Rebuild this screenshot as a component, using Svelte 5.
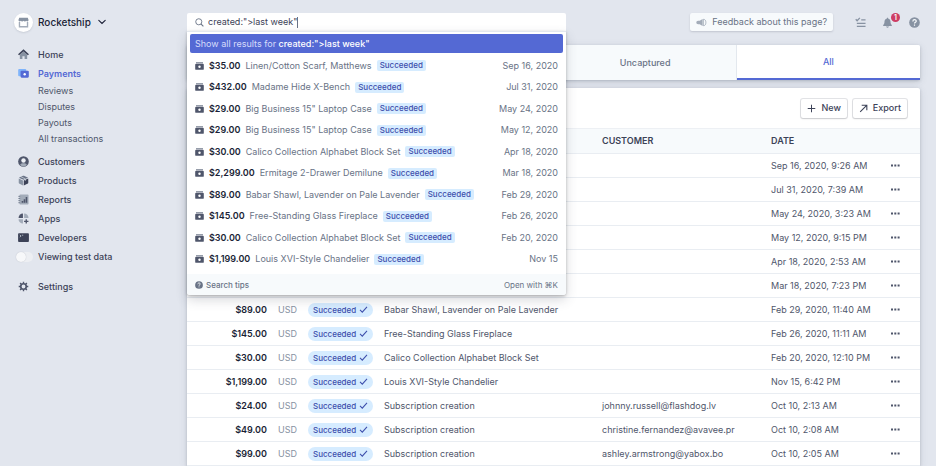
<script lang="ts">
    interface Payment {
        amount: string;
        description: string;
        customer?: string;
        date: string;
        day?: string;
    }

    const payments: Payment[] = [
        { amount: '$35.00', description: 'Linen/Cotton Scarf, Matthews', date: 'Sep 16, 2020, 9:26 AM', day: 'Sep 16, 2020' },
        { amount: '$432.00', description: 'Madame Hide X-Bench', date: 'Jul 31, 2020, 7:39 AM', day: 'Jul 31, 2020' },
        { amount: '$29.00', description: 'Big Business 15" Laptop Case', date: 'May 24, 2020, 3:23 AM', day: 'May 24, 2020' },
        { amount: '$29.00', description: 'Big Business 15" Laptop Case', date: 'May 12, 2020, 9:15 PM', day: 'May 12, 2020' },
        { amount: '$30.00', description: 'Calico Collection Alphabet Block Set', date: 'Apr 18, 2020, 2:53 AM', day: 'Apr 18, 2020' },
        { amount: '$2,299.00', description: 'Ermitage 2-Drawer Demilune', date: 'Mar 18, 2020, 7:23 PM', day: 'Mar 18, 2020' },
        { amount: '$89.00', description: 'Babar Shawl, Lavender on Pale Lavender', date: 'Feb 29, 2020, 11:40 AM', day: 'Feb 29, 2020' },
        { amount: '$145.00', description: 'Free-Standing Glass Fireplace', date: 'Feb 26, 2020, 11:11 AM', day: 'Feb 26, 2020' },
        { amount: '$30.00', description: 'Calico Collection Alphabet Block Set', date: 'Feb 20, 2020, 12:10 PM', day: 'Feb 20, 2020' },
        { amount: '$1,199.00', description: 'Louis XVI-Style Chandelier', date: 'Nov 15, 6:42 PM', day: 'Nov 15' },
        { amount: '$24.00', description: 'Subscription creation', customer: 'johnny.russell@flashdog.lv', date: 'Oct 10, 2:13 AM' },
        { amount: '$49.00', description: 'Subscription creation', customer: 'christine.fernandez@avavee.pr', date: 'Oct 10, 2:08 AM' },
        { amount: '$99.00', description: 'Subscription creation', customer: 'ashley.armstrong@yabox.bo', date: 'Oct 10, 2:05 AM' },
    ];

    const tabs = ['Succeeded', 'Refunded', 'Uncaptured', 'All'];
    const paymentLinks = ['Reviews', 'Disputes', 'Payouts', 'All transactions'];
    const mainLinks = ['Customers', 'Products', 'Reports', 'Apps', 'Developers'];

    // Tabs and rows that lie under the open search results
    const coveredTabs = 2;
    const coveredRows = 6;

    let query = $state('created:">last week"');
    let activeTab = $state('All');
    let testData = $state(false);

    const searchOpen = $derived(query.length > 0);
    const results = $derived(payments.filter((p) => p.day));
</script>

{#snippet icon(name: string)}
    <svg class="icon" viewBox="0 0 12 12" aria-hidden="true">
        {#if name === 'Home'}
            <path d="M2 6.2 6 2.8l4 3.4V11H7.2V8H4.8v3H2z" fill="#8792a2" />
            <path d="M.6 6.3 6 1.5l5.4 4.8" fill="none" stroke="#3c4257" stroke-width="1.7" />
        {:else if name === 'Payments'}
            <rect x=".2" y="1" width="8.8" height="8" rx="1.2" fill="#7fb4fb" />
            <rect x="2.8" y="3" width="9" height="7.6" rx="1.2" fill="#5469d4" />
            <circle cx="7.3" cy="6.8" r="1.3" fill="#fff" />
        {:else if name === 'Customers'}
            <circle cx="6" cy="6" r="5.8" fill="#4f566b" />
            <path d="M2.3 9.8C3 8.3 4.500 8 6 8s3 .3 3.700 1.800A5.300 5.300 0 0 1 6 11.400a5.300 5.300 0 0 1-3.700-1.600z" fill="#a3acb9" />
            <circle cx="6" cy="4.9" r="2.4" fill="#eef1f6" />
        {:else if name === 'Products'}
            <path d="M.8 3.7 5.400 6v5.500L1.300 9.300a1 1 0 0 1-.5-.8z" fill="#8792a2" />
            <path d="M6.300 6 11.200 3.700v4.800a1 1 0 0 1-.5.800L6.300 11.500z" fill="#3c4257" />
            <path d="M1 3 5.500.7h1L11 3 6 5.300z" fill="#6b7488" />
            <path d="m3.200 1.900 4.900 2.400v2" fill="none" stroke="#c1c9d2" stroke-width=".9" />
        {:else if name === 'Reports'}
            <rect x="1.600" y=".6" width="9.900" height="10.800" rx="1" fill="#a3acb9" />
            <path d="M.4 2.600h2M.4 4.900h2M.4 7.200h2M.4 9.500h2" stroke="#697386" stroke-width=".9" />
            <path d="M4 7.500h1.700v2H4zM6.200 5.700h1.700v3.800H6.200zM8.400 3.300h1.700v6.200H8.400z" fill="#4f566b" />
        {:else if name === 'Apps'}
            <path d="M5.400.6v4.800H.6A4.800 4.800 0 0 1 5.400.6z" fill="#4f566b" />
            <path d="M6.700.6a4.800 4.800 0 0 1 4.800 4.800H6.700zM.6 6.700h4.800v4.800A4.800 4.800 0 0 1 .6 6.700z" fill="#a3acb9" />
            <path d="M9 6.700v4.800M6.600 9.100h4.800" stroke="#4f566b" stroke-width="1.500" />
        {:else if name === 'Developers'}
            <rect x=".1" y="1.300" width="11.800" height="9.500" rx="1" fill="#3c4257" />
            <path d="m2 3.200 1.400 1.200L2 5.600M4.400 3.500h1.300" fill="none" stroke="#cfd7df" stroke-width=".8" />
        {:else if name === 'Settings'}
            <circle cx="6" cy="6" r="3" fill="none" stroke="#4f566b" stroke-width="1.800" />
            <path d="M6 .8v1.800M6 9.400v1.800M.8 6h1.800M9.400 6h1.800M2.300 2.300l1.300 1.300M8.400 8.400l1.300 1.300M9.700 2.300 8.400 3.600M3.600 8.400 2.300 9.700" stroke="#4f566b" stroke-width="1.500" />
        {/if}
    </svg>
{/snippet}

{#snippet help()}
    <svg class="help" viewBox="0 0 12 12" aria-hidden="true">
        <circle cx="6" cy="6" r="5.800" fill="currentColor" />
        <path d="M4.200 4.800c0-2.500 3.700-2.400 3.700-.3C7.900 5.800 6 5.700 6 7.200M6 8.200v1.300" fill="none" stroke="#f7fafc" stroke-width="1.300" />
    </svg>
{/snippet}

<div class="layout">
    <aside class="sidebar">
        <button class="account">
            <span class="avatar">
                <svg viewBox="0 0 12 12" aria-hidden="true">
                    <path d="M1.300.8h9.400l.8 2.600c0 1.800-2 1.800-2.500.6-.5 1.200-2.500 1.200-3 0-.5 1.200-2.500 1.200-3 0C2.500 5.200.5 5.200.5 3.400z" fill="#8792a2" />
                    <path d="M1.600 5.500v5.200h8.800V5.500" fill="none" stroke="#a3acb9" stroke-width="1.500" />
                </svg>
            </span>
            Rocketship
            <svg class="chevron" viewBox="0 0 8 8" aria-hidden="true">
                <path d="m.8 2.300 3.200 3.200 3.200-3.200" fill="none" stroke="currentColor" stroke-width="1.100" stroke-linecap="round" />
            </svg>
        </button>

        <nav>
            <a class="link" href="#home">{@render icon('Home')}Home</a>
            <a class="link current" href="#payments">{@render icon('Payments')}Payments</a>
            <div class="sub-links">
                {#each paymentLinks as link (link)}
                    <a class="sub-link" href="#payments">{link}</a>
                {/each}
            </div>
            {#each mainLinks as link (link)}
                <a class="link" href="#{link.toLowerCase()}">{@render icon(link)}{link}</a>
            {/each}
            <label class="link toggle">
                <input type="checkbox" bind:checked={testData} />
                Viewing test data
            </label>
            <a class="link settings" href="#settings">{@render icon('Settings')}Settings</a>
        </nav>
    </aside>

    <main class="content">
        <header class="topbar">
            <div class="search">
                <div class="search-box">
                    <svg class="magnifier" viewBox="0 0 10 10" aria-hidden="true">
                        <circle cx="4.200" cy="4.200" r="3.400" fill="none" stroke="currentColor" />
                        <path d="m6.600 6.600 2.700 2.700" stroke="currentColor" stroke-width="1.200" />
                    </svg>
                    <input class="query" type="text" aria-label="Search" bind:value={query} />
                    <span class="caret"></span>
                </div>
                {#if searchOpen}
                    <div class="dropdown">
                        <button class="show-all">Show all results for <strong>{query}</strong></button>
                        <ul class="results">
                            {#each results as result}
                                <li class="result">
                                    <svg class="result-icon" viewBox="0 0 9 8" aria-hidden="true">
                                        <path d="M1 .3h7v1H1z" fill="#697386" />
                                        <rect x=".2" y="1.800" width="8.600" height="6" rx=".9" fill="#4f566b" />
                                        <circle cx="4.500" cy="4.800" r="1.200" fill="#fff" />
                                    </svg>
                                    <span class="result-amount">{result.amount}</span>
                                    <span>{result.description}</span>
                                    <span class="tag">Succeeded</span>
                                    <span class="result-date">{result.day}</span>
                                </li>
                            {/each}
                        </ul>
                        <footer class="dropdown-footer">
                            <a class="tips" href="#tips">{@render help()}Search tips</a>
                            <span>Open with ⌘K</span>
                        </footer>
                    </div>
                {/if}
            </div>

            <div class="tools">
                <button class="feedback">
                    <svg class="horn" viewBox="0 0 12 10" aria-hidden="true">
                        <path d="M7.200 1v8L4 7H2.200a2 2 0 0 1 0-4H4z" fill="#a3acb9" />
                        <path d="M8 1.500c3.800-.8 3.800 7.800 0 7z" fill="none" stroke="#a3acb9" />
                    </svg>
                    Feedback about this page?
                </button>
                <button class="tool" aria-label="Setup guide">
                    <svg viewBox="0 0 12 12" aria-hidden="true">
                        <path d="m.8 2.500 1.500 1.600L5.300.9M6.800 3.200h4.700M2 7h9.500M2 10.300h9.500" fill="none" stroke="currentColor" stroke-width="1.400" />
                    </svg>
                </button>
                <button class="tool" aria-label="Notifications">
                    <svg viewBox="0 0 12 12" aria-hidden="true">
                        <path d="M5.400.7h1.200v.8C8.500 2 9.300 3.500 9.300 5.300c0 2 .6 2.800 1.400 3.500v.9H1.300v-.9c.8-.7 1.400-1.500 1.400-3.500C2.700 3.500 3.500 2 5.400 1.500zM4.400 10.400h3.200c-.3 1.600-2.900 1.600-3.200 0z" fill="currentColor" />
                    </svg>
                    <span class="badge">1</span>
                </button>
                <button class="tool" aria-label="Help">{@render help()}</button>
            </div>
        </header>

        <div class="tabs" role="tablist">
            {#each tabs as tab, i (tab)}
                <button
                    class="tab"
                    class:active={tab === activeTab}
                    class:covered={searchOpen && i < coveredTabs}
                    role="tab"
                    aria-selected={tab === activeTab}
                    onclick={() => (activeTab = tab)}
                >
                    {tab}
                </button>
            {/each}
        </div>

        <section class="panel">
            <div class="actions">
                <button class="action">
                    <svg viewBox="0 0 10 10" aria-hidden="true">
                        <path d="M5 .8v8.400M.8 5h8.400" stroke="currentColor" stroke-width="1.100" />
                    </svg>
                    New
                </button>
                <button class="action">
                    <svg viewBox="0 0 10 10" aria-hidden="true">
                        <path d="M1.300 8.700 8.500 1.500M3 1.300h5.700V7" fill="none" stroke="currentColor" stroke-width="1.200" />
                    </svg>
                    Export
                </button>
            </div>

            <table class="payments">
                <colgroup>
                    <col class="col-amount" />
                    <col class="col-currency" />
                    <col class="col-status" />
                    <col class="col-description" />
                    <col class="col-customer" />
                    <col class="col-date" />
                    <col class="col-more" />
                </colgroup>
                <thead>
                    <tr>
                        <th class="amount"><span class:covered={searchOpen}>Amount</span></th>
                        <th></th>
                        <th></th>
                        <th><span class:covered={searchOpen}>Description</span></th>
                        <th>Customer</th>
                        <th>Date</th>
                        <th></th>
                    </tr>
                </thead>
                <tbody>
                    {#each payments as payment, i}
                        {@const covered = searchOpen && i < coveredRows}
                        <tr>
                            <td class="amount"><span class:covered>{payment.amount}</span></td>
                            <td class="currency"><span class:covered>USD</span></td>
                            <td>
                                <span class="pill" class:covered>
                                    Succeeded
                                    <svg viewBox="0 0 10 8" aria-hidden="true">
                                        <path d="M1 4.500 3.600 7 9 1" fill="none" stroke="currentColor" stroke-width="1.200" />
                                    </svg>
                                </span>
                            </td>
                            <td><span class:covered>{payment.description}</span></td>
                            <td>{payment.customer ?? ''}</td>
                            <td>{payment.date}</td>
                            <td>
                                <button class="more" aria-label="More actions">
                                    <svg viewBox="0 0 9 3" aria-hidden="true">
                                        <path d="M0 .5h2v2H0zM3.300.5h2v2h-2zM6.600.5h2v2h-2z" fill="currentColor" />
                                    </svg>
                                </button>
                            </td>
                        </tr>
                    {/each}
                </tbody>
            </table>
        </section>
    </main>
</div>

<style>
    :global(body) {
        background: #e2e6ee;
    }

    .layout {
        display: flex;
        box-sizing: border-box;
        min-height: 100vh;
        font-family: Inter, 'Liberation Sans', sans-serif;
        font-size: 9px;
        line-height: 14px;
        color: #3c4257;
        white-space: nowrap;
    }

    button,
    input {
        margin: 0;
        padding: 0;
        border: 0;
        background: none;
        font: inherit;
        color: inherit;
    }

    a {
        color: inherit;
        text-decoration: none;
    }

    svg {
        display: block;
        flex: none;
    }

    .covered {
        visibility: hidden;
    }

    .sidebar {
        flex: none;
        box-sizing: border-box;
        width: 187px;
        padding: 12px 0 0 14px;
    }

    .account {
        display: flex;
        align-items: center;
        gap: 5px;
        height: 20px;
        margin-bottom: 13px;
        font-size: 10px;
        font-weight: 500;
        color: #1a1f36;
    }

    .avatar {
        display: grid;
        place-items: center;
        width: 19px;
        height: 19px;
        border-radius: 50%;
        background: #fff;
        box-shadow: 0 1px 2px rgba(60, 66, 87, 0.15);
    }

    .avatar svg {
        width: 11px;
        height: 11px;
    }

    .chevron {
        width: 8px;
        height: 8px;
        margin-left: 2px;
    }

    .link {
        display: flex;
        align-items: center;
        gap: 9px;
        height: 19px;
        padding-left: 4px;
        font-weight: 500;
    }

    .link.current {
        font-weight: 600;
        color: #5469d4;
    }

    .icon {
        width: 11px;
        height: 11px;
    }

    .sub-links {
        margin-bottom: 5px;
        padding-left: 24px;
    }

    .sub-link {
        display: block;
        line-height: 16px;
        color: #4f566b;
    }

    .link.toggle {
        gap: 5px;
        padding-left: 2px;
    }

    .toggle input {
        appearance: none;
        display: flex;
        width: 17px;
        height: 10px;
        border-radius: 5px;
        background: #edeff3;
    }

    .toggle input::before {
        content: '';
        width: 10px;
        height: 10px;
        border-radius: 50%;
        background: #f7f8fa;
        box-shadow: 0 0 1px rgba(60, 66, 87, 0.3);
    }

    .toggle input:checked {
        justify-content: flex-end;
        background: #5469d4;
    }

    .settings {
        margin-top: 11px;
    }

    .content {
        display: flex;
        flex: 1;
        flex-direction: column;
        min-width: 0;
        padding: 13px 16px 0 0;
    }

    .topbar {
        display: flex;
        justify-content: space-between;
        height: 18px;
        margin-bottom: 14px;
    }

    .search {
        position: relative;
        z-index: 1;
        width: 379px;
    }

    .search-box {
        display: flex;
        align-items: center;
        height: 18px;
        padding-left: 8px;
        border-radius: 2px 2px 0 0;
        background: #fff;
    }

    .magnifier {
        width: 9px;
        height: 9px;
        margin-right: 4px;
        color: #697386;
    }

    .query {
        field-sizing: content;
        outline: none;
    }

    .caret {
        width: 1px;
        height: 11px;
        background: #697386;
    }

    .dropdown {
        position: absolute;
        top: 100%;
        left: 0;
        right: 0;
        border-top: 1px solid #e3e8ee;
        border-radius: 0 0 3px 3px;
        background: #fff;
        box-shadow: 0 1px 3px rgba(0, 0, 0, 0.25), 0 5px 12px rgba(60, 66, 87, 0.2);
    }

    .show-all {
        display: block;
        width: calc(100% - 6px);
        height: 19px;
        margin: 2px 3px;
        padding: 0 5px;
        border-radius: 2px;
        background: #5469d4;
        color: #d6dcfb;
        text-align: left;
    }

    .show-all strong {
        font-weight: 500;
        color: #fff;
    }

    .results {
        display: flex;
        flex-direction: column;
        height: 215px;
        margin: 0;
        padding: 0 8px 4px;
        list-style: none;
    }

    .result {
        display: flex;
        flex: 1;
        align-items: center;
        gap: 5px;
        color: #697386;
    }

    .result-icon {
        width: 9px;
        height: 8px;
    }

    .result-amount {
        font-weight: 600;
        color: #1a1f36;
    }

    .tag {
        padding: 0 3px;
        border-radius: 2px;
        background: #d6ecff;
        font-size: 8px;
        font-weight: 500;
        line-height: 11px;
        color: #3d4eac;
    }

    .result-date {
        margin-left: auto;
    }

    .dropdown-footer {
        display: flex;
        align-items: center;
        justify-content: space-between;
        height: 21px;
        padding: 0 8px;
        border-radius: 0 0 3px 3px;
        background: #f7fafc;
        font-size: 8px;
        color: #697386;
    }

    .tips {
        display: flex;
        align-items: center;
        gap: 3px;
        font-weight: 500;
    }

    .tips :global(.help) {
        width: 8px;
        height: 8px;
    }

    .tools {
        display: flex;
        align-items: center;
        gap: 16px;
    }

    .feedback {
        display: flex;
        align-items: center;
        gap: 5px;
        height: 18px;
        margin-right: 6px;
        padding: 0 6px;
        border-radius: 2px;
        background: #f7fafc;
        box-shadow: 0 1px 2px rgba(60, 66, 87, 0.2);
        color: #697386;
    }

    .horn {
        width: 11px;
        height: 9px;
    }

    .tool {
        position: relative;
        color: #8792a2;
    }

    .tool svg {
        width: 11px;
        height: 11px;
    }

    .badge {
        position: absolute;
        top: -4px;
        right: -7px;
        width: 9px;
        height: 9px;
        border-radius: 50%;
        background: #cd3d64;
        font-size: 7px;
        font-weight: 600;
        line-height: 9px;
        text-align: center;
        color: #fff;
    }

    .tabs {
        display: grid;
        grid-template-columns: repeat(4, 1fr);
        margin-bottom: 8px;
        border-radius: 2px;
        background: #f7fafc;
        box-shadow: 0 1px 3px rgba(60, 66, 87, 0.25), 0 2px 8px rgba(60, 66, 87, 0.12);
    }

    .tab {
        height: 35px;
        font-weight: 500;
        color: #697386;
    }

    .tab.active {
        border-bottom: 2px solid #5469d4;
        border-radius: 0 2px 0 0;
        background: #fff;
        box-shadow: -1px 0 #e3e8ee;
        color: #5469d4;
    }

    .panel {
        flex: 1;
        border-radius: 2px 2px 0 0;
        background: #fff;
        box-shadow: 0 1px 3px rgba(60, 66, 87, 0.25), 0 2px 8px rgba(60, 66, 87, 0.12);
    }

    .actions {
        display: flex;
        align-items: center;
        justify-content: flex-end;
        gap: 6px;
        height: 40px;
        padding-right: 13px;
    }

    .action {
        display: flex;
        align-items: center;
        gap: 5px;
        height: 19px;
        padding: 0 6px;
        border-radius: 2px;
        background: #fff;
        box-shadow: 0 0 0 1px rgba(60, 66, 87, 0.14), 0 1px 2px rgba(0, 0, 0, 0.12);
        font-weight: 500;
    }

    .action svg {
        width: 9px;
        height: 9px;
    }

    .payments {
        width: 100%;
        table-layout: fixed;
        border-collapse: separate;
        border-spacing: 0;
    }

    .col-amount {
        width: 91px;
    }

    .col-currency {
        width: 30px;
    }

    .col-status {
        width: 76px;
    }

    .col-description {
        width: 218px;
    }

    .col-date {
        width: 120px;
    }

    .col-more {
        width: 29px;
    }

    th,
    td {
        box-sizing: border-box;
        height: 24px;
        padding: 0;
        border-bottom: 1px solid #e9edf2;
        text-align: left;
        vertical-align: middle;
        color: #4f566b;
    }

    th {
        height: 26px;
        border-top: 1px solid #edf0f4;
        background: #f7fafc;
        font-weight: 600;
        text-transform: uppercase;
        color: #3c4257;
    }

    .amount {
        padding-right: 11px;
        text-align: right;
    }

    td.amount {
        font-weight: 600;
        color: #1a1f36;
    }

    td.currency {
        color: #8792a2;
    }

    .pill {
        display: inline-flex;
        align-items: center;
        gap: 3px;
        height: 14px;
        padding: 0 5px;
        border-radius: 7px;
        background: #d6ecff;
        font-size: 8px;
        font-weight: 500;
        vertical-align: middle;
        color: #3d4eac;
    }

    .pill svg {
        width: 9px;
        height: 7px;
    }

    .more {
        display: block;
        color: #4f566b;
    }

    .more svg {
        width: 9px;
        height: 3px;
    }
</style>
